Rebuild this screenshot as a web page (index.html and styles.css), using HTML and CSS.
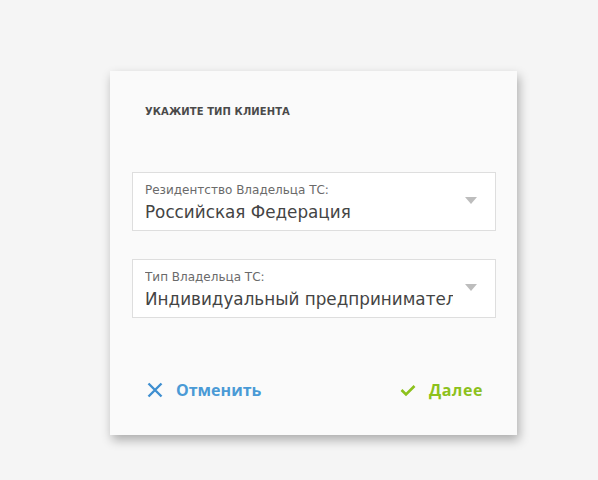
FILE: index.html
```html
<!DOCTYPE html>
<html lang="ru">
<head>
<meta charset="utf-8">
<link rel="stylesheet" href="styles.css">
</head>
<body>
<div class="card">
  <div class="title">УКАЖИТЕ ТИП КЛИЕНТА</div>
  <div class="fields">
    <div class="select">
      <div class="text">
        <div class="label">Резидентство Владельца ТС:</div>
        <div class="value">Российская Федерация</div>
      </div>
      <span class="arrow"></span>
    </div>
    <div class="select">
      <div class="text">
        <div class="label">Тип Владельца ТС:</div>
        <div class="value">Индивидуальный предприниматель</div>
      </div>
      <span class="arrow"></span>
    </div>
  </div>
  <div class="actions">
    <button class="btn cancel">
      <svg width="16" height="16" viewBox="0 0 16 16"><path d="M1.5 1.5L14.5 14.5M14.5 1.5L1.5 14.5" stroke="currentColor" stroke-width="2.4" fill="none"/></svg>
      <span>Отменить</span>
    </button>
    <button class="btn next">
      <svg width="16" height="13" viewBox="0 0 16 13"><path d="M1.5 6L6 10.5L14.5 2" stroke="currentColor" stroke-width="2.6" fill="none"/></svg>
      <span>Далее</span>
    </button>
  </div>
</div>
</body>
</html>
```
FILE: styles.css
```css
html, body {
  margin: 0;
  padding: 0;
  background: #f5f5f5;
  font-family: "DejaVu Sans", "Open Sans", sans-serif;
}
body {
  padding-top: 71px;
  padding-left: 110px;
  min-height: 480px;
  box-sizing: border-box;
}
.card {
  width: 407px;
  height: 364px;
  box-sizing: border-box;
  background: #fafafa;
  box-shadow: 2px 5px 10px rgba(0,0,0,0.3);
  padding: 0 21px 0 22px;
  display: flex;
  flex-direction: column;
}
.title {
  margin-top: 34px;
  padding-left: 13px;
  font-size: 10px;
  font-weight: 600;
  color: #4a4a4a;
  line-height: 14px;
  letter-spacing: 0.1px;
}
.fields {
  margin-top: 53px;
  display: flex;
  flex-direction: column;
  gap: 28px;
}
.select {
  height: 59px;
  box-sizing: border-box;
  background: #fff;
  border: 1px solid #dedede;
  display: flex;
  align-items: center;
  padding: 0 18px 0 12px;
}
.text {
  flex: 1;
  min-width: 0;
  overflow: hidden;
  margin-right: 12px;
  padding-top: 1px;
}
.label {
  font-size: 12px;
  color: #6a6a6a;
  line-height: 16px;
  white-space: nowrap;
}
.value {
  margin-top: 3px;
  font-size: 16.8px;
  color: #444;
  line-height: 22px;
  white-space: nowrap;
  overflow: hidden;
}
.arrow {
  width: 0;
  height: 0;
  border-left: 6.5px solid transparent;
  border-right: 6.5px solid transparent;
  border-top: 7px solid #bdbdbd;
  margin-top: -2px;
}
.actions {
  margin-top: 61px;
  display: flex;
  justify-content: space-between;
  padding: 0 13px 0 15px;
}
.btn {
  display: flex;
  align-items: center;
  gap: 13px;
  background: none;
  border: 0;
  padding: 0;
  font-family: "Open Sans", sans-serif;
  font-size: 16px;
  font-weight: 700;
  cursor: pointer;
}
.cancel { color: #4a9ad6; }
.cancel svg { color: #3f8fd0; }
.next { color: #8cc11c; }
.next span { letter-spacing: 0.6px; }
```
